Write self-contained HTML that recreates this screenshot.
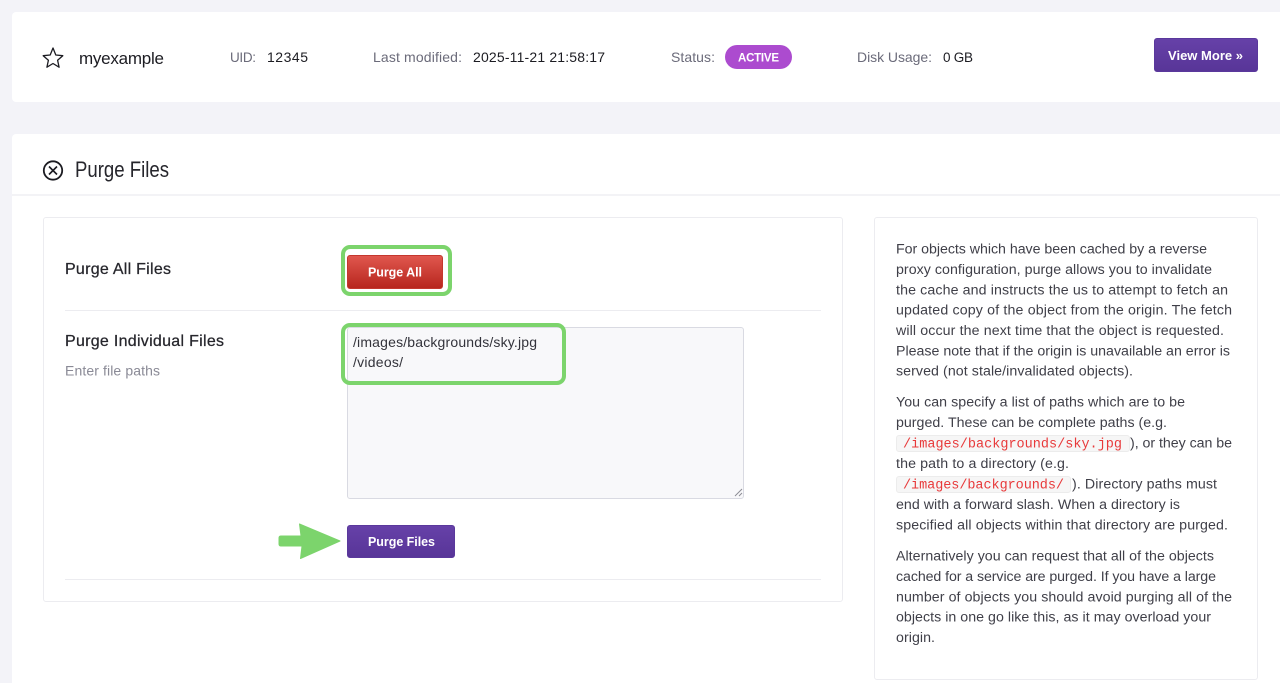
<!DOCTYPE html>
<html lang="en">
<head>
<meta charset="utf-8">
<title>Purge Files</title>
<style>
html,body{margin:0;padding:0;width:1280px;height:683px;overflow:hidden;background:#f3f3f8;}
body{position:relative;font-family:"Liberation Sans",sans-serif;}
.b{position:absolute;box-sizing:border-box;}
svg.t{position:absolute;left:0;top:0;}
svg.t text{font-family:"Liberation Sans",sans-serif;}
.s text{font-size:14.2px;fill:#3f3f48;}
.m text{font-size:14px;fill:#6b6b7a;}
.d text{font-size:14px;fill:#1c1c22;}
svg.t .c text{font-family:"Liberation Mono",monospace;font-size:13.5px;fill:#e8393a;}
.w text{font-weight:bold;fill:#fff;font-size:12.5px;}
</style>
</head>
<body>
<div class="b" style="left:12px;top:12px;width:1268px;height:90px;background:#fff;border-radius:4px 0 0 4px;"></div>
<div class="b" style="left:12px;top:134px;width:1268px;height:549px;background:#fff;border-radius:4px 0 0 0;"></div>
<div class="b" style="left:12px;top:194px;width:1268px;height:2px;background:#f3f3f6;"></div>
<div class="b" style="left:725px;top:45px;width:67px;height:24px;background:#ac4bcf;border-radius:12px;"></div>
<div class="b" style="left:1154px;top:38px;width:104px;height:34px;background:linear-gradient(#6641a8,#583598);border:1px solid #5a389c;border-radius:3px;"></div>
<div class="b" style="left:43px;top:217px;width:800px;height:385px;border:1px solid #ececf0;border-radius:3px;"></div>
<div class="b" style="left:874px;top:217px;width:384px;height:463px;border:1px solid #ececf0;border-radius:3px;"></div>
<div class="b" style="left:65px;top:310px;width:756px;height:1px;background:#ececf0;"></div>
<div class="b" style="left:65px;top:579px;width:756px;height:1px;background:#ececf0;"></div>
<div class="b" style="left:347px;top:255px;width:96px;height:34px;background:linear-gradient(#e0574e,#b7261e);border:1px solid #c4372e;border-radius:3px;"></div>
<div class="b" style="left:347px;top:327px;width:397px;height:172px;background:#f8f8fa;border:1px solid #d9dae2;border-radius:3px;"></div>
<div class="b" style="left:347px;top:525px;width:108px;height:33px;background:linear-gradient(#6641a8,#583598);border:1px solid #5a389c;border-radius:3px;"></div>
<div class="b" style="left:896px;top:435px;width:234px;height:17px;background:#f6f6f6;border:1px solid #ececec;border-radius:3px;"></div>
<div class="b" style="left:896px;top:476px;width:175px;height:17px;background:#f6f6f6;border:1px solid #ececec;border-radius:3px;"></div>
<div class="b" style="left:341px;top:245px;width:111px;height:51px;border:4px solid #7cd46c;border-radius:9px;"></div>
<div class="b" style="left:341px;top:323px;width:225px;height:62px;border:4px solid #7cd46c;border-radius:9px;"></div>

<svg class="t" width="1280" height="683" viewBox="0 0 1280 683" xmlns="http://www.w3.org/2000/svg">
  <!-- star -->
  <path d="M53 48 L55.8 55 L62.8 55.7 L57.6 60.2 L59.1 67.2 L53 63.5 L46.9 67.2 L48.4 60.2 L43.2 55.7 L50.2 55 Z" fill="none" stroke="#1c1c22" stroke-width="1.3" stroke-linejoin="round"/>
  <!-- x-circle -->
  <circle cx="53" cy="170.5" r="9.2" fill="none" stroke="#1c1c22" stroke-width="1.8"/>
  <path d="M49 166.5 L57 174.5 M57 166.5 L49 174.5" fill="none" stroke="#1c1c22" stroke-width="1.6"/>
  <!-- resize grip -->
  <path d="M735 496 L742 489 M739 496 L742 493" stroke="#8d8d95" stroke-width="1"/>
  <!-- arrow -->
  <path d="M281 536 H301 L299.5 524 L340 541 L300.5 558.5 L302 546 H281 Q279 546 279 544 V538 Q279 536 281 536 Z" fill="#7cd46c" stroke="#7cd46c" stroke-linejoin="round"/>

  <text x="79" y="64" font-size="17" fill="#1c1c22" textLength="85">myexample</text>
  <g class="m">
    <text x="230" y="62" textLength="26" style="font-size:13.5px">UID:</text>
    <text x="373" y="62" textLength="89">Last modified:</text>
    <text x="671" y="62" textLength="44">Status:</text>
    <text x="857" y="62" textLength="75">Disk Usage:</text>
  </g>
  <g class="d">
    <text x="267" y="62" textLength="41">12345</text>
    <text x="473" y="62" textLength="132">2025-11-21 21:58:17</text>
    <text x="943" y="62" textLength="30" style="font-size:13.5px">0 GB</text>
  </g>
  <g class="w">
    <text x="738" y="61.5" textLength="41" style="font-size:11.5px">ACTIVE</text>
    <text x="1168" y="60" textLength="75" style="font-size:13px">View More »</text>
    <text x="368" y="276.5" textLength="54">Purge All</text>
    <text x="368" y="546" textLength="67">Purge Files</text>
  </g>

  <text x="75" y="177" font-size="22" fill="#26262c" textLength="94" lengthAdjust="spacingAndGlyphs">Purge Files</text>
  <text x="65" y="274" font-size="16" fill="#26262c" stroke="#26262c" stroke-width=".25" textLength="106">Purge All Files</text>
  <text x="65" y="346" font-size="16" fill="#26262c" stroke="#26262c" stroke-width=".25" textLength="159">Purge Individual Files</text>
  <text x="65" y="375.5" font-size="14" fill="#8a8a96" textLength="95">Enter file paths</text>
  <text x="353" y="347" font-size="14" fill="#33333b" textLength="184">/images/backgrounds/sky.jpg</text>
  <text x="353" y="367" font-size="14" fill="#33333b" textLength="50">/videos/</text>

  <g class="s">
    <text x="896" y="253.5" textLength="311">For objects which have been cached by a reverse</text>
    <text x="896" y="274" textLength="316">proxy configuration, purge allows you to invalidate</text>
    <text x="896" y="294.5" textLength="332">the cache and instructs the us to attempt to fetch an</text>
    <text x="896" y="314.5" textLength="336">updated copy of the object from the origin. The fetch</text>
    <text x="896" y="335" textLength="328">will occur the next time that the object is requested.</text>
    <text x="896" y="355.5" textLength="334">Please note that if the origin is unavailable an error is</text>
    <text x="896" y="375.5" textLength="237">served (not stale/invalidated objects).</text>
    <text x="896" y="406.5" textLength="289">You can specify a list of paths which are to be</text>
    <text x="896" y="427" textLength="271">purged. These can be complete paths (e.g.</text>
    <text x="1130" y="447.5" textLength="102">), or they can be</text>
    <text x="896" y="468" textLength="173">the path to a directory (e.g.</text>
    <text x="1072" y="488.5" textLength="145">). Directory paths must</text>
    <text x="896" y="509" textLength="284">end with a forward slash. When a directory is</text>
    <text x="896" y="529.5" textLength="332">specified all objects within that directory are purged.</text>
    <text x="896" y="560.5" textLength="318">Alternatively you can request that all of the objects</text>
    <text x="896" y="581" textLength="320">cached for a service are purged. If you have a large</text>
    <text x="896" y="601.5" textLength="336">number of objects you should avoid purging all of the</text>
    <text x="896" y="621.5" textLength="315">objects in one go like this, as it may overload your</text>
    <text x="896" y="642" textLength="39">origin.</text>
  </g>
  <g class="c">
    <text x="903" y="447.5" textLength="219">/images/backgrounds/sky.jpg</text>
    <text x="903" y="488.5" textLength="161">/images/backgrounds/</text>
  </g>
</svg>
</body>
</html>
